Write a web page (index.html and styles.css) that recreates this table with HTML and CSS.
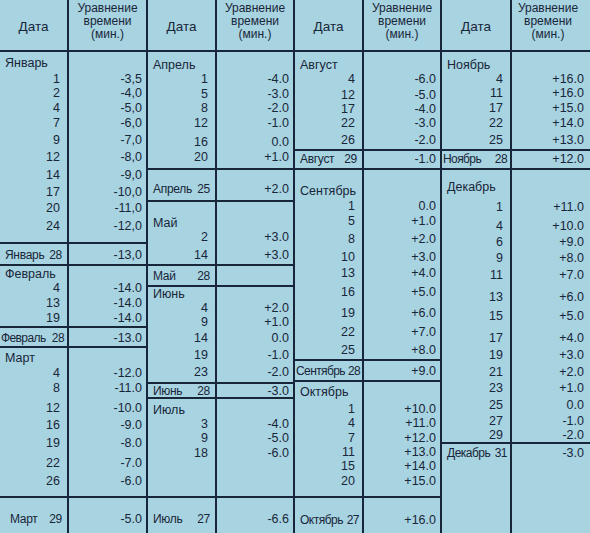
FILE: index.html
```html
<!DOCTYPE html>
<html lang="ru">
<head>
<meta charset="utf-8">
<title>Уравнение времени</title>
<link rel="stylesheet" href="styles.css">
</head>
<body>
<div class="sheet">

  <section class="grp g1">
    <div class="blk head"><div class="d hd">Дата</div><div class="v hv">Уравнение<br>времени<br>(мин.)</div></div>
    <div class="blk b-jan">
      <div class="row m4"><span class="d mon">Январь</span></div>
      <div class="row m2"><span class="d">1</span><span class="v">-3,5</span></div>
      <div class="row"><span class="d">2</span><span class="v">-4,0</span></div>
      <div class="row m1"><span class="d">4</span><span class="v">-5,0</span></div>
      <div class="row m1"><span class="d">7</span><span class="v">-6,0</span></div>
      <div class="row m3"><span class="d">9</span><span class="v">-7,0</span></div>
      <div class="row m3"><span class="d">12</span><span class="v">-8,0</span></div>
      <div class="row m4"><span class="d">14</span><span class="v">-9,0</span></div>
      <div class="row m3"><span class="d">17</span><span class="v">-10,0</span></div>
      <div class="row m2"><span class="d">20</span><span class="v">-11,0</span></div>
      <div class="row m4"><span class="d">24</span><span class="v">-12,0</span></div>
    </div>
    <div class="blk b-jan28">
      <div class="row m4"><span class="d sum"><span>Январь</span><span>28</span></span><span class="v">-13,0</span></div>
    </div>
    <div class="blk b-feb">
      <div class="row m1"><span class="d mon">Февраль</span></div>
      <div class="row"><span class="d">4</span><span class="v">-14.0</span></div>
      <div class="row m1"><span class="d">13</span><span class="v">-14.0</span></div>
      <div class="row m1"><span class="d">19</span><span class="v">-14.0</span></div>
    </div>
    <div class="blk b-feb28">
      <div class="row m3"><span class="d sum tight"><span>Февраль</span><span>28</span></span><span class="v">-13.0</span></div>
    </div>
    <div class="blk b-mar">
      <div class="row m3"><span class="d mon">Март</span></div>
      <div class="row m1"><span class="d">4</span><span class="v">-12.0</span></div>
      <div class="row m1"><span class="d">8</span><span class="v">-11.0</span></div>
      <div class="row m6"><span class="d">12</span><span class="v">-10.0</span></div>
      <div class="row m3"><span class="d">16</span><span class="v">-9.0</span></div>
      <div class="row m4"><span class="d">19</span><span class="v">-8.0</span></div>
      <div class="row m6"><span class="d">22</span><span class="v">-7.0</span></div>
      <div class="row m4"><span class="d">26</span><span class="v">-6.0</span></div>
    </div>
    <div class="blk last">
      <div class="row m14"><span class="d sum indent"><span>Март</span><span>29</span></span><span class="v">-5.0</span></div>
    </div>
  </section>

  <section class="grp g2">
    <div class="blk head"><div class="d hd">Дата</div><div class="v hv">Уравнение<br>времени<br>(мин.)</div></div>
    <div class="blk b-apr">
      <div class="row m6"><span class="d mon">Апрель</span></div>
      <div class="row"><span class="d">1</span><span class="v">-4.0</span></div>
      <div class="row m1"><span class="d">5</span><span class="v">-3.0</span></div>
      <div class="row"><span class="d">8</span><span class="v">-2.0</span></div>
      <div class="row m1"><span class="d">12</span><span class="v">-1.0</span></div>
      <div class="row m5"><span class="d">16</span><span class="v">0.0</span></div>
      <div class="row m1"><span class="d">20</span><span class="v">+1.0</span></div>
    </div>
    <div class="blk b-apr25">
      <div class="row m12"><span class="d sum"><span>Апрель</span><span>25</span></span><span class="v">+2.0</span></div>
    </div>
    <div class="blk b-may">
      <div class="row m14"><span class="d mon">Май</span></div>
      <div class="row"><span class="d">2</span><span class="v">+3.0</span></div>
      <div class="row m4"><span class="d">14</span><span class="v">+3.0</span></div>
    </div>
    <div class="blk b-may28">
      <div class="row m3"><span class="d sum"><span>Май</span><span>28</span></span><span class="v"></span></div>
    </div>
    <div class="blk b-jun">
      <div class="row"><span class="d mon">Июнь</span></div>
      <div class="row"><span class="d">4</span><span class="v">+2.0</span></div>
      <div class="row"><span class="d">9</span><span class="v">+1.0</span></div>
      <div class="row m2"><span class="d">14</span><span class="v">0.0</span></div>
      <div class="row m3"><span class="d">19</span><span class="v">-1.0</span></div>
      <div class="row m3"><span class="d">23</span><span class="v">-2.0</span></div>
    </div>
    <div class="blk b-jun28">
      <div class="row"><span class="d sum"><span>Июнь</span><span>28</span></span><span class="v">-3.0</span></div>
    </div>
    <div class="blk b-jul">
      <div class="row m4"><span class="d mon">Июль</span></div>
      <div class="row"><span class="d">3</span><span class="v">-4.0</span></div>
      <div class="row"><span class="d">9</span><span class="v">-5.0</span></div>
      <div class="row m1"><span class="d">18</span><span class="v">-6.0</span></div>
    </div>
    <div class="blk last">
      <div class="row m14"><span class="d sum"><span>Июль</span><span>27</span></span><span class="v">-6.6</span></div>
    </div>
  </section>

  <section class="grp g3">
    <div class="blk head"><div class="d hd">Дата</div><div class="v hv">Уравнение<br>времени<br>(мин.)</div></div>
    <div class="blk b-aug">
      <div class="row m6"><span class="d mon">Август</span></div>
      <div class="row"><span class="d">4</span><span class="v">-6.0</span></div>
      <div class="row m2"><span class="d">12</span><span class="v">-5.0</span></div>
      <div class="row"><span class="d">17</span><span class="v">-4.0</span></div>
      <div class="row"><span class="d">22</span><span class="v">-3.0</span></div>
      <div class="row m3"><span class="d">26</span><span class="v">-2.0</span></div>
    </div>
    <div class="blk b-aug29">
      <div class="row m1"><span class="d sum"><span>Август</span><span>29</span></span><span class="v">-1.0</span></div>
    </div>
    <div class="blk b-sep">
      <div class="row m14"><span class="d mon">Сентябрь</span></div>
      <div class="row m1"><span class="d">1</span><span class="v">0.0</span></div>
      <div class="row m1"><span class="d">5</span><span class="v">+1.0</span></div>
      <div class="row m4"><span class="d">8</span><span class="v">+2.0</span></div>
      <div class="row m4"><span class="d">10</span><span class="v">+3.0</span></div>
      <div class="row m2"><span class="d">13</span><span class="v">+4.0</span></div>
      <div class="row m5"><span class="d">16</span><span class="v">+5.0</span></div>
      <div class="row m7"><span class="d">19</span><span class="v">+6.0</span></div>
      <div class="row m5"><span class="d">22</span><span class="v">+7.0</span></div>
      <div class="row m4"><span class="d">25</span><span class="v">+8.0</span></div>
    </div>
    <div class="blk b-sep28">
      <div class="row m3"><span class="d sum tight"><span>Сентябрь</span><span>28</span></span><span class="v">+9.0</span></div>
    </div>
    <div class="blk b-oct">
      <div class="row m3"><span class="d mon">Октябрь</span></div>
      <div class="row m3"><span class="d">1</span><span class="v">+10.0</span></div>
      <div class="row"><span class="d">4</span><span class="v">+11.0</span></div>
      <div class="row m1"><span class="d">7</span><span class="v">+12.0</span></div>
      <div class="row"><span class="d">11</span><span class="v">+13.0</span></div>
      <div class="row"><span class="d">15</span><span class="v">+14.0</span></div>
      <div class="row m1"><span class="d">20</span><span class="v">+15.0</span></div>
    </div>
    <div class="blk last">
      <div class="row m15"><span class="d sum snug"><span>Октябрь</span><span>27</span></span><span class="v">+16.0</span></div>
    </div>
  </section>

  <section class="grp g4">
    <div class="blk head"><div class="d hd">Дата</div><div class="v hv">Уравнение<br>времени<br>(мин.)</div></div>
    <div class="blk b-nov">
      <div class="row m6"><span class="d mon">Ноябрь</span></div>
      <div class="row"><span class="d">4</span><span class="v">+16.0</span></div>
      <div class="row"><span class="d">11</span><span class="v">+16.0</span></div>
      <div class="row m1"><span class="d">17</span><span class="v">+15.0</span></div>
      <div class="row m1"><span class="d">22</span><span class="v">+14.0</span></div>
      <div class="row m3"><span class="d">25</span><span class="v">+13.0</span></div>
    </div>
    <div class="blk b-nov28">
      <div class="row m1"><span class="d sum tight"><span>Ноябрь</span><span>28</span></span><span class="v">+12.0</span></div>
    </div>
    <div class="blk b-dec">
      <div class="row m10"><span class="d mon">Декабрь</span></div>
      <div class="row m6"><span class="d">1</span><span class="v">+11.0</span></div>
      <div class="row m5"><span class="d">4</span><span class="v">+10.0</span></div>
      <div class="row m2"><span class="d">6</span><span class="v">+9.0</span></div>
      <div class="row m2"><span class="d">9</span><span class="v">+8.0</span></div>
      <div class="row m3"><span class="d">11</span><span class="v">+7.0</span></div>
      <div class="row m8"><span class="d">13</span><span class="v">+6.0</span></div>
      <div class="row m5"><span class="d">15</span><span class="v">+5.0</span></div>
      <div class="row m8"><span class="d">17</span><span class="v">+4.0</span></div>
      <div class="row m3"><span class="d">19</span><span class="v">+3.0</span></div>
      <div class="row m3"><span class="d">21</span><span class="v">+2.0</span></div>
      <div class="row m2"><span class="d">23</span><span class="v">+1.0</span></div>
      <div class="row m3"><span class="d">25</span><span class="v">0.0</span></div>
      <div class="row m2"><span class="d">27</span><span class="v">-1.0</span></div>
      <div class="row"><span class="d">29</span><span class="v">-2.0</span></div>
    </div>
    <div class="blk last">
      <div class="row m2"><span class="d sum snug"><span>Декабрь</span><span>31</span></span><span class="v">-3.0</span></div>
    </div>
  </section>

</div>
</body>
</html>
```

FILE: styles.css
```css
html, body {
  margin: 0;
  padding: 0;
  background: #a8d3e0;
}

body {
  width: 590px;
  height: 533px;
  overflow: hidden;
  font-family: "Liberation Sans", Arial, sans-serif;
  font-size: 12.5px;
  color: #18263a;
}

.sheet {
  display: grid;
  grid-template-columns: 148px 147px 147px 148px;
  height: 533px;
  background: #a8d3e0;
}

.grp {
  display: flex;
  flex-direction: column;
  border-right: 2px solid #18263a;
  background: linear-gradient(to right,
    transparent 67px, #18263a 67px, #18263a 69px, transparent 69px);
}

.g4 {
  border-right: none;
  background: linear-gradient(to right,
    transparent 68px, #18263a 68px, #18263a 70px, transparent 70px);
}

.blk {
  box-sizing: border-box;
  border-bottom: 2px solid #18263a;
  flex: none;
}

.blk.last {
  flex: 1;
  border-bottom: none;
}

.head {
  height: 52px;
  display: flex;
}

.row {
  display: flex;
  height: 14px;
  line-height: 14px;
  white-space: nowrap;
}

.d {
  width: 67px;
  box-sizing: border-box;
  padding: 0 7px 0 5px;
  text-align: right;
  flex: none;
}

.g4 .d { width: 68px; }

.v {
  flex: 1;
  margin-left: 2px;
  padding-right: 4px;
  text-align: right;
}

.g4 .v { padding-right: 6px; }

.mon { text-align: left; }

.sum {
  display: flex;
  justify-content: space-between;
  gap: 3px;
  font-size: 12px;
  letter-spacing: -0.3px;
  padding: 0 5px 0 5px;
}

.sum.tight {
  padding: 0 3px 0 1px;
  letter-spacing: -0.6px;
}

.sum.snug {
  padding: 0 3px 0 5px;
  letter-spacing: -0.5px;
}

.sum.indent { padding-left: 10px; }

.hd {
  align-self: center;
  text-align: center;
  padding: 0;
  font-size: 13.5px;
  margin-top: 2px;
}

.hv {
  text-align: center;
  padding: 2px 0 0 0;
  font-size: 12px;
  line-height: 13px;
}

/* block heights (incl. bottom rule) */
.b-jan   { height: 192px; }
.b-jan28 { height: 22px; }
.b-feb   { height: 62px; }
.b-feb28 { height: 20px; }
.b-mar   { height: 150px; }

.b-apr   { height: 118px; }
.b-apr25 { height: 32px; }
.b-may   { height: 64px; }
.b-may28 { height: 21px; }
.b-jun   { height: 97px; }
.b-jun28 { height: 15px; }
.b-jul   { height: 99px; }

.b-aug   { height: 99px; }
.b-aug29 { height: 19px; }
.b-sep   { height: 191px; }
.b-sep28 { height: 21px; }
.b-oct   { height: 116px; }

.b-nov   { height: 99px; }
.b-nov28 { height: 19px; }
.b-dec   { height: 274px; }

/* row spacing */
.m1  { margin-top: 1px; }
.m2  { margin-top: 2px; }
.m3  { margin-top: 3px; }
.m4  { margin-top: 4px; }
.m5  { margin-top: 5px; }
.m6  { margin-top: 6px; }
.m7  { margin-top: 7px; }
.m8  { margin-top: 8px; }
.m10 { margin-top: 10px; }
.m12 { margin-top: 12px; }
.m14 { margin-top: 14px; }
.m15 { margin-top: 15px; }
```
